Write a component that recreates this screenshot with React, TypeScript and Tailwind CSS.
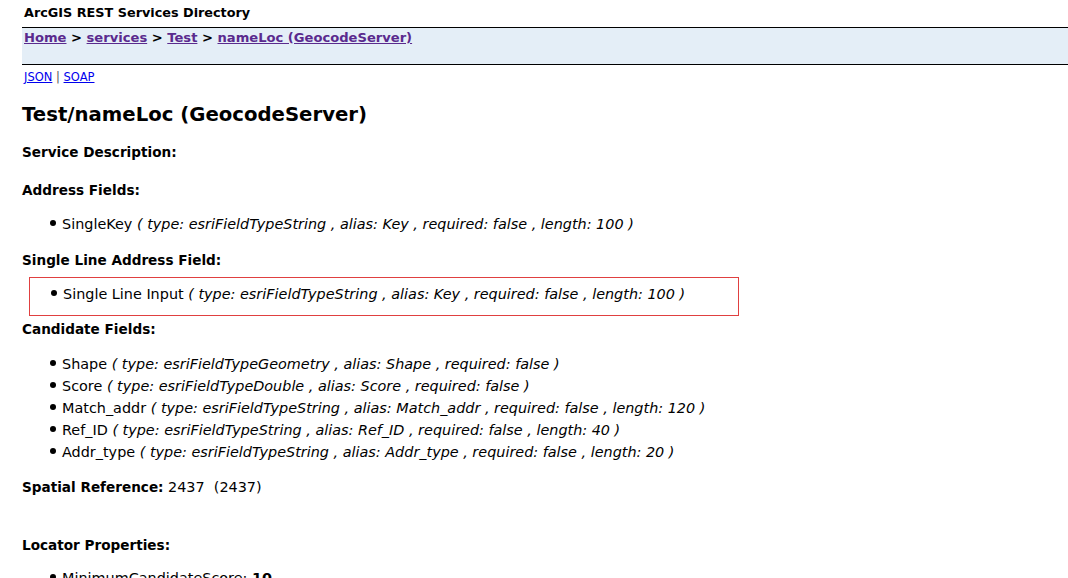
import React from "react";

const Bullet = () => (
  <span className="inline-block w-[6px] h-[6px] rounded-full bg-black mr-[6px] align-middle relative top-[-2px]" />
);

const Item = ({ name, rest }: { name: string; rest: string }) => (
  <li className="h-[22px] leading-[22px] -ml-[12px] text-[14.4px] whitespace-nowrap">
    <Bullet />
    {name} <i>( {rest} )</i>
  </li>
);

export default function App() {
  return (
    <div className="min-h-[578px] bg-white text-black font-['DejaVu_Sans','Verdana',sans-serif] text-[14px]">
      <div className="pl-[24px] pt-[4px] h-[27px] text-[12.8px] font-bold leading-[18px]">ArcGIS REST Services Directory</div>
      <div className="ml-[22px] h-[38px] border-y border-black bg-[#e4eef7] pl-[2px] text-[13.1px] font-bold leading-[20px]">
        <a href="#" className="underline text-[#5a2a8e]">Home</a> &gt;{" "}
        <a href="#" className="underline text-[#5a2a8e]">services</a> &gt;{" "}
        <a href="#" className="underline text-[#5a2a8e]">Test</a> &gt;{" "}
        <a href="#" className="underline text-[#5a2a8e]">nameLoc (GeocodeServer)</a>
      </div>
      <div className="pl-[24px] pt-[4px] text-[11.5px] leading-[16px]">
        <a href="#" className="underline text-[#0000ee]">JSON</a> <span className="text-[#555]">|</span>{" "}
        <a href="#" className="underline text-[#0000ee]">SOAP</a>
      </div>
      <div className="pl-[22px]">
        <h2 className="mt-[16px] text-[19.7px] font-bold leading-[28px]">Test/nameLoc (GeocodeServer)</h2>
        <div className="mt-[13px] text-[13.6px] font-bold leading-[20px]">Service Description:</div>
        <div className="mt-[18px] text-[13.6px] font-bold leading-[20px]">Address Fields:</div>
        <ul className="list-none pl-[40px] mt-[13px]">
          <Item name="SingleKey" rest="type: esriFieldTypeString , alias: Key , required: false , length: 100" />
        </ul>
        <div className="mt-[15px] text-[13.6px] font-bold leading-[20px]">Single Line Address Field:</div>
        <div className="ml-[7px] mt-[7px] w-[710px] h-[39px] border border-[#e04040] pt-[5px]">
          <ul className="list-none pl-[33px]">
            <Item name="Single Line Input" rest="type: esriFieldTypeString , alias: Key , required: false , length: 100" />
          </ul>
        </div>
        <div className="mt-[3px] text-[13.6px] font-bold leading-[20px]">Candidate Fields:</div>
        <ul className="list-none pl-[40px] mt-[14px]">
          <Item name="Shape" rest="type: esriFieldTypeGeometry , alias: Shape , required: false" />
          <Item name="Score" rest="type: esriFieldTypeDouble , alias: Score , required: false" />
          <Item name="Match_addr" rest="type: esriFieldTypeString , alias: Match_addr , required: false , length: 120" />
          <Item name="Ref_ID" rest="type: esriFieldTypeString , alias: Ref_ID , required: false , length: 40" />
          <Item name="Addr_type" rest="type: esriFieldTypeString , alias: Addr_type , required: false , length: 20" />
        </ul>
        <div className="mt-[14px] leading-[20px]">
          <b className="text-[13.6px]">Spatial Reference:</b> <span className="text-[14.4px]">2437&nbsp; (2437)</span>
        </div>
        <div className="mt-[38px] text-[13.6px] font-bold leading-[20px]">Locator Properties:</div>
        <ul className="list-none pl-[40px] mt-[12px]">
          <li className="h-[22px] leading-[22px] -ml-[12px] text-[14.4px]">
            <Bullet />
            MinimumCandidateScore: <b>10</b>
          </li>
        </ul>
      </div>
    </div>
  );
}
